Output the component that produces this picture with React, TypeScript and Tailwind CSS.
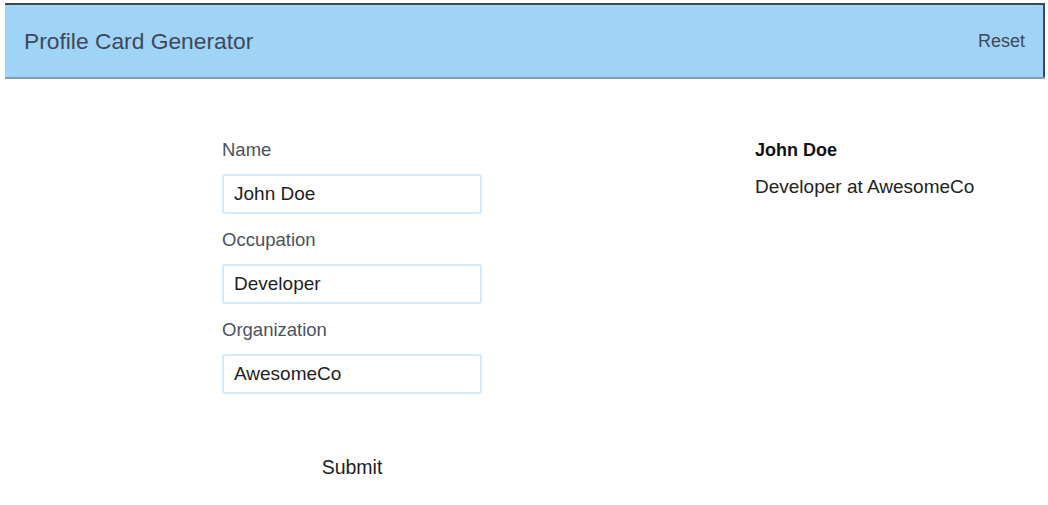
import { useState } from 'react';

const font = { fontFamily: '"Liberation Sans", Arial, sans-serif' };

function Field({ label, value, onChange }: { label: string; value: string; onChange: (v: string) => void }) {
  return (
    <div className="flex flex-col">
      <label className="text-[18.5px] leading-6 text-[#4a5260]">{label}</label>
      <input
        value={value}
        onChange={e => onChange(e.target.value)}
        className="mt-[12px] mb-[14px] h-10 w-[260px] rounded-[3px] border-2 border-[#d3eafc] px-[10px] text-[19px] text-[#1e1e1e] outline-none"
      />
    </div>
  );
}

export default function App() {
  const [name, setName] = useState('John Doe');
  const [occupation, setOccupation] = useState('Developer');
  const [org, setOrg] = useState('AwesomeCo');

  const reset = () => {
    setName('');
    setOccupation('');
    setOrg('');
  };

  return (
    <div className="min-h-[505px] bg-white" style={font}>
      {/* Header */}
      <div className="pt-[3px] pl-[5px] pr-[3px]">
        <header className="flex h-[74px] items-center justify-between border-t-2 border-r-2 border-[#3d4a56] bg-[#a0d4f7] pl-[19px] pr-[18px] shadow-[0_2px_0_#c9cdd2]">
          <h1 className="text-[22.8px] text-[#3e4858]">Profile Card Generator</h1>
          <button onClick={reset} className="text-[18px] text-[#3e4858]">Reset</button>
        </header>
        <div className="h-[2px] bg-[#7f9fb8]" />
      </div>

      {/* Body */}
      <div className="flex pl-[222px] pt-[59px]">
        <form className="flex w-[260px] flex-col" onSubmit={e => e.preventDefault()}>
          <Field label="Name" value={name} onChange={setName} />
          <Field label="Occupation" value={occupation} onChange={setOccupation} />
          <Field label="Organization" value={org} onChange={setOrg} />
          <button type="submit" className="mt-[47px] self-center text-[19.5px] leading-6 text-[#1e1e1e]">Submit</button>
        </form>

        <div className="ml-[273px] flex flex-col">
          <div className="text-[18px] leading-6 font-bold text-[#111]">{name}</div>
          <div className="mt-[13px] text-[19px] leading-6 text-[#222]">
            {occupation} at {org}
          </div>
        </div>
      </div>
    </div>
  );
}
